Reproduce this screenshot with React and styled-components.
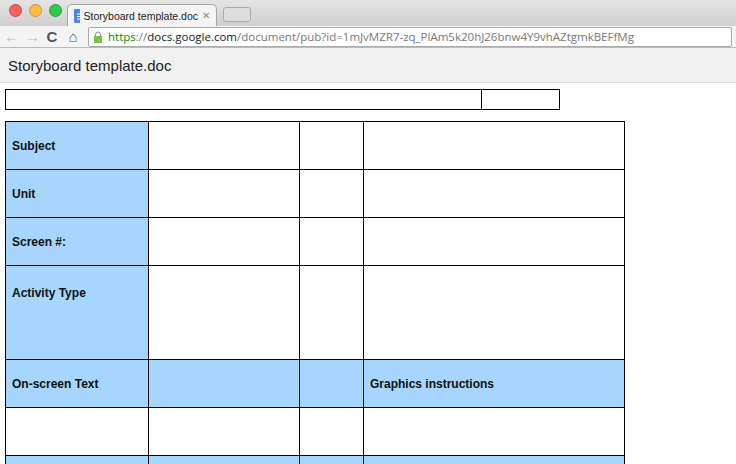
import React from "react";
import styled, { createGlobalStyle } from "styled-components";

const G = createGlobalStyle`
  html,body{margin:0;padding:0;background:#fff;overflow:hidden;}
  body{font-family:"Liberation Sans",Arial,sans-serif;}
`;
const TabStrip = styled.div`
  height:26px;background:linear-gradient(#e4e4e4,#cfcfcf);display:flex;align-items:flex-end;position:relative;
`;
const Lights = styled.div`display:flex;gap:7px;padding:0 0 9px 9px;width:58px;`;
const Light = styled.span`width:11px;height:11px;border-radius:50%;background:${p=>p.c};border:1px solid rgba(0,0,0,.2);`;
const Tab = styled.div`
  width:150px;height:22px;background:#f4f4f4;border:1px solid #a8a8a8;border-bottom:none;border-radius:5px 5px 0 0;white-space:nowrap;
  display:flex;align-items:center;gap:4px;padding:0 6px;font-size:10.5px;color:#222;box-sizing:border-box;
`;
const Close = styled.span`margin-left:auto;color:#888;font-size:10px;`;
const NewTab = styled.div`width:26px;height:13px;margin:0 0 4px 6px;border:1px solid #aaa;border-radius:3px;background:#ddd;`;
const Toolbar = styled.div`
  height:21px;background:#f4f4f4;display:flex;align-items:center;padding:0 4px;gap:9px;border-bottom:1px solid #bbb;
`;
const Nav = styled.span`color:${p=>p.c||"#bbb"};font-size:15px;font-weight:bold;width:12px;text-align:center;`;
const Url = styled.div`
  flex:1;height:18px;background:#fff;border:1px solid #aaa;border-radius:2px;display:flex;align-items:center;gap:5px;padding:0 4px;
  font-family:"Open Sans",sans-serif;font-size:11.5px;color:#777;white-space:nowrap;overflow:hidden;
`;
const Green = styled.span`color:#0a8a0a;`;
const Dark = styled.span`color:#222;`;
const TitleBar = styled.div`
  height:34px;background:#f1f1f1;border-bottom:1px solid #ddd;display:flex;align-items:center;padding-left:8px;font-size:15px;color:#222;
`;
const Body = styled.div`padding:6px 5px;`;
const Small = styled.div`display:grid;grid-template-columns:475px 80px;width:555px;height:21px;border:1px solid #000;box-sizing:border-box;& > div+div{border-left:1px solid #000;}`;
const Table = styled.div`
  margin-top:11px;display:grid;grid-template-columns:143px 151px 64px 261px;width:619px;border-top:1px solid #000;border-left:1px solid #000;
  & > div:nth-child(4n+1){width:143px;}
`;
const Cell = styled.div`
  height:${p=>p.h}px;background:${p=>p.b?"#a6d6fd":"#fff"};border-right:1px solid #000;border-bottom:1px solid #000;box-sizing:border-box;
  font-size:12px;font-weight:bold;color:#111;padding:${p=>p.top?"20px":"0"} 6px 0;display:flex;align-items:${p=>p.top?"flex-start":"center"};
`;
const rows=[["Subject",48],["Unit",48],["Screen #:",48],["Activity Type",94,1],["On-screen Text",48,0,1,"Graphics instructions"],["",48],["Instructions text",48,0,1]];
export default function App(){
  return <><G/>
    <TabStrip><Lights><Light c="#fc605c"/><Light c="#fdbc40"/><Light c="#34c84a"/></Lights>
      <Tab><svg width="12" height="14"><rect width="12" height="14" rx="1" fill="#4a86e8"/><path d="M3 5h6M3 7.5h6M3 10h4" stroke="#fff"/></svg>Storyboard template.doc<Close>✕</Close></Tab><NewTab/></TabStrip>
    <Toolbar><Nav>←</Nav><Nav>→</Nav><Nav c="#555">C</Nav><Nav c="#555">⌂</Nav>
      <Url><svg width="10" height="12"><rect x="1" y="5" width="8" height="7" fill="#7cc242"/><path d="M2.5 5V3.5a2.5 2.5 0 015 0V5" stroke="#888" fill="none"/></svg><span><Green>https</Green>://<Dark>docs.google.com</Dark>/document/pub?id=1mJvMZR7-zq_PlAm5k20hJ26bnw4Y9vhAZtgmkBEFfMg</span></Url></Toolbar>
    <TitleBar>Storyboard template.doc</TitleBar>
    <Body><Small><div/><div/></Small>
      <Table>{rows.map(([t,h,top,b,g],i)=><React.Fragment key={i}>
        <Cell h={h} top={top} b={b||(i<4)}>{t}</Cell><Cell h={h} b={b}/><Cell h={h} b={b}/><Cell h={h} b={b}>{g}</Cell>
      </React.Fragment>)}</Table></Body>
  </>;
}
